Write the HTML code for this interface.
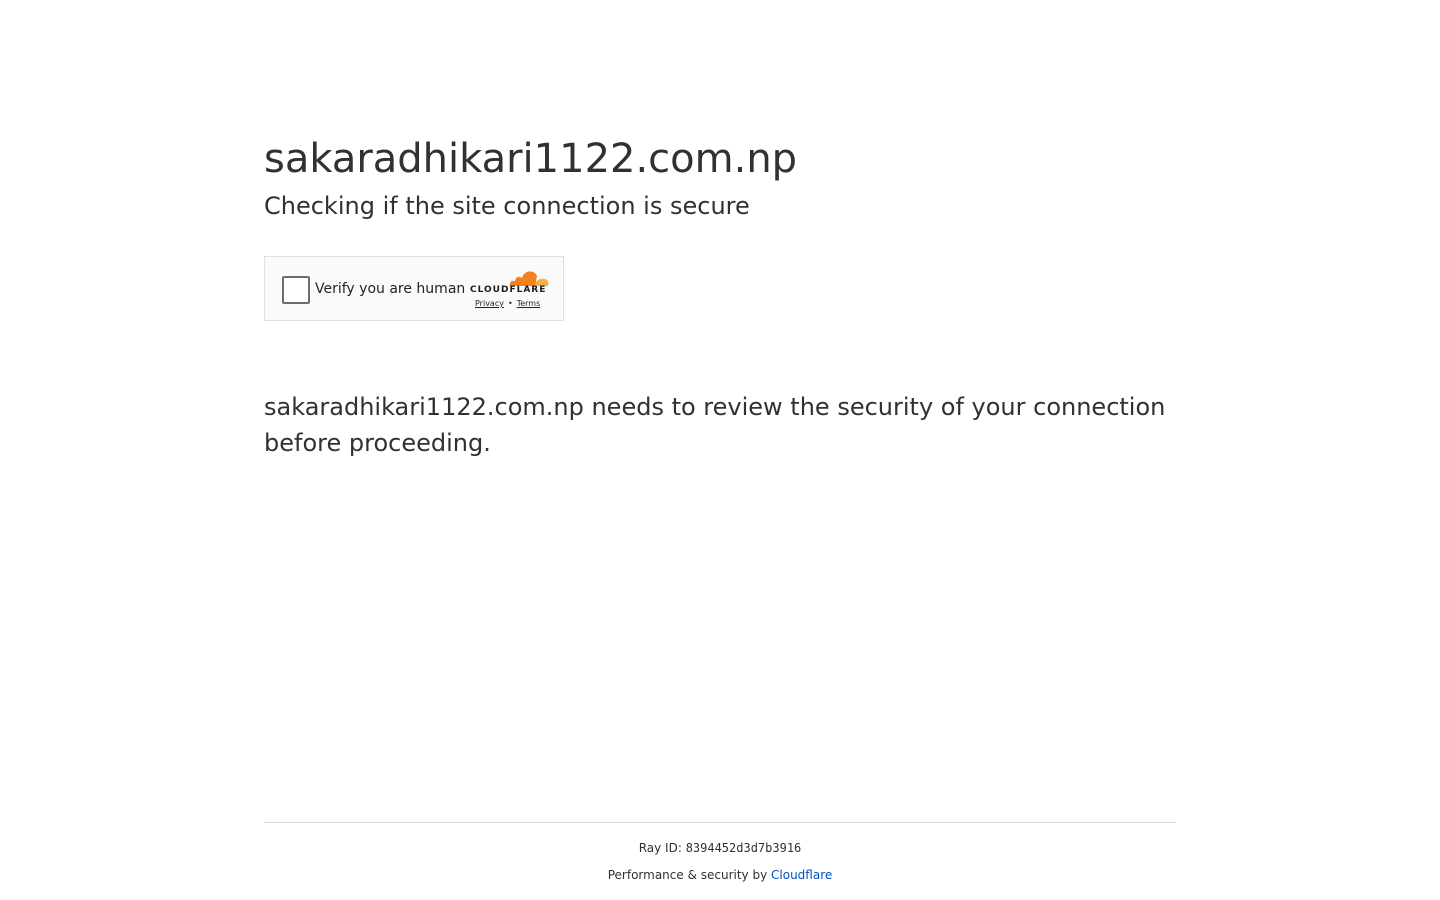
<!DOCTYPE html>
<html><head><style>
body{margin:0;background:#fff;font-family:"DejaVu Sans",sans-serif;color:#313131;}
h1{position:absolute;left:264px;top:134px;margin:0;font-size:40px;font-weight:400;line-height:50px;white-space:nowrap;}
h2{position:absolute;left:264px;top:191px;margin:0;font-size:24px;font-weight:400;line-height:30px;}
.box{position:absolute;left:264px;top:256px;width:298px;height:63px;border:1px solid #e0e0e0;background:#fafafa;}
.cb{position:absolute;left:17px;top:19px;width:24px;height:24px;border:2px solid #6d6d6d;border-radius:2px;background:#fff;}
.vt{position:absolute;left:50px;top:23px;font-size:14px;line-height:18px;color:#232323;}
.cf{position:absolute;left:205px;top:28px;font-size:9px;font-weight:bold;letter-spacing:1px;color:#1d1d1d;}
.links{position:absolute;left:210px;top:41px;font-size:8px;color:#232323;}
.links u{margin:0 4px;}
p{position:absolute;left:264px;top:389px;width:920px;margin:0;font-size:24px;line-height:36px;}
.hr{position:absolute;left:264px;top:822px;width:912px;border-top:1px solid #d9d9d9;}
.f{position:absolute;left:0;width:1440px;text-align:center;font-size:12px;color:#313131;}
a{color:#0051c3;text-decoration:none;}
</style></head><body>
<h1>sakaradhikari1122.com.np</h1>
<h2>Checking if the site connection is secure</h2>
<div class="box">
<div class="cb"></div>
<div class="vt">Verify you are human</div>
<svg style="position:absolute;left:244px;top:10px" width="40" height="20" viewBox="0 0 40 20">
<path d="M1 19 C0 15 3 13 6 14 C7 9 11 9 13 11 C15 3 25 2 28 9 L26 19Z" fill="#f48120"/>
<path d="M25 19 C27 13 31 11 35 12 C39 12 40 16 39 19Z" fill="#faad3f"/>
</svg>
<div class="cf">CLOUDFLARE</div>
<div class="links" style="top:42px;left:206px"><u>Privacy</u>•<u>Terms</u></div>
</div>
<p>sakaradhikari1122.com.np needs to review the security of your connection before proceeding.</p>
<div class="hr"></div>
<div class="f" style="top:841px">Ray ID: <span style="font-family:'DejaVu Sans Mono',monospace">8394452d3d7b3916</span></div>
<div class="f" style="top:868px">Performance &amp; security by <a>Cloudflare</a></div>
</body></html>
